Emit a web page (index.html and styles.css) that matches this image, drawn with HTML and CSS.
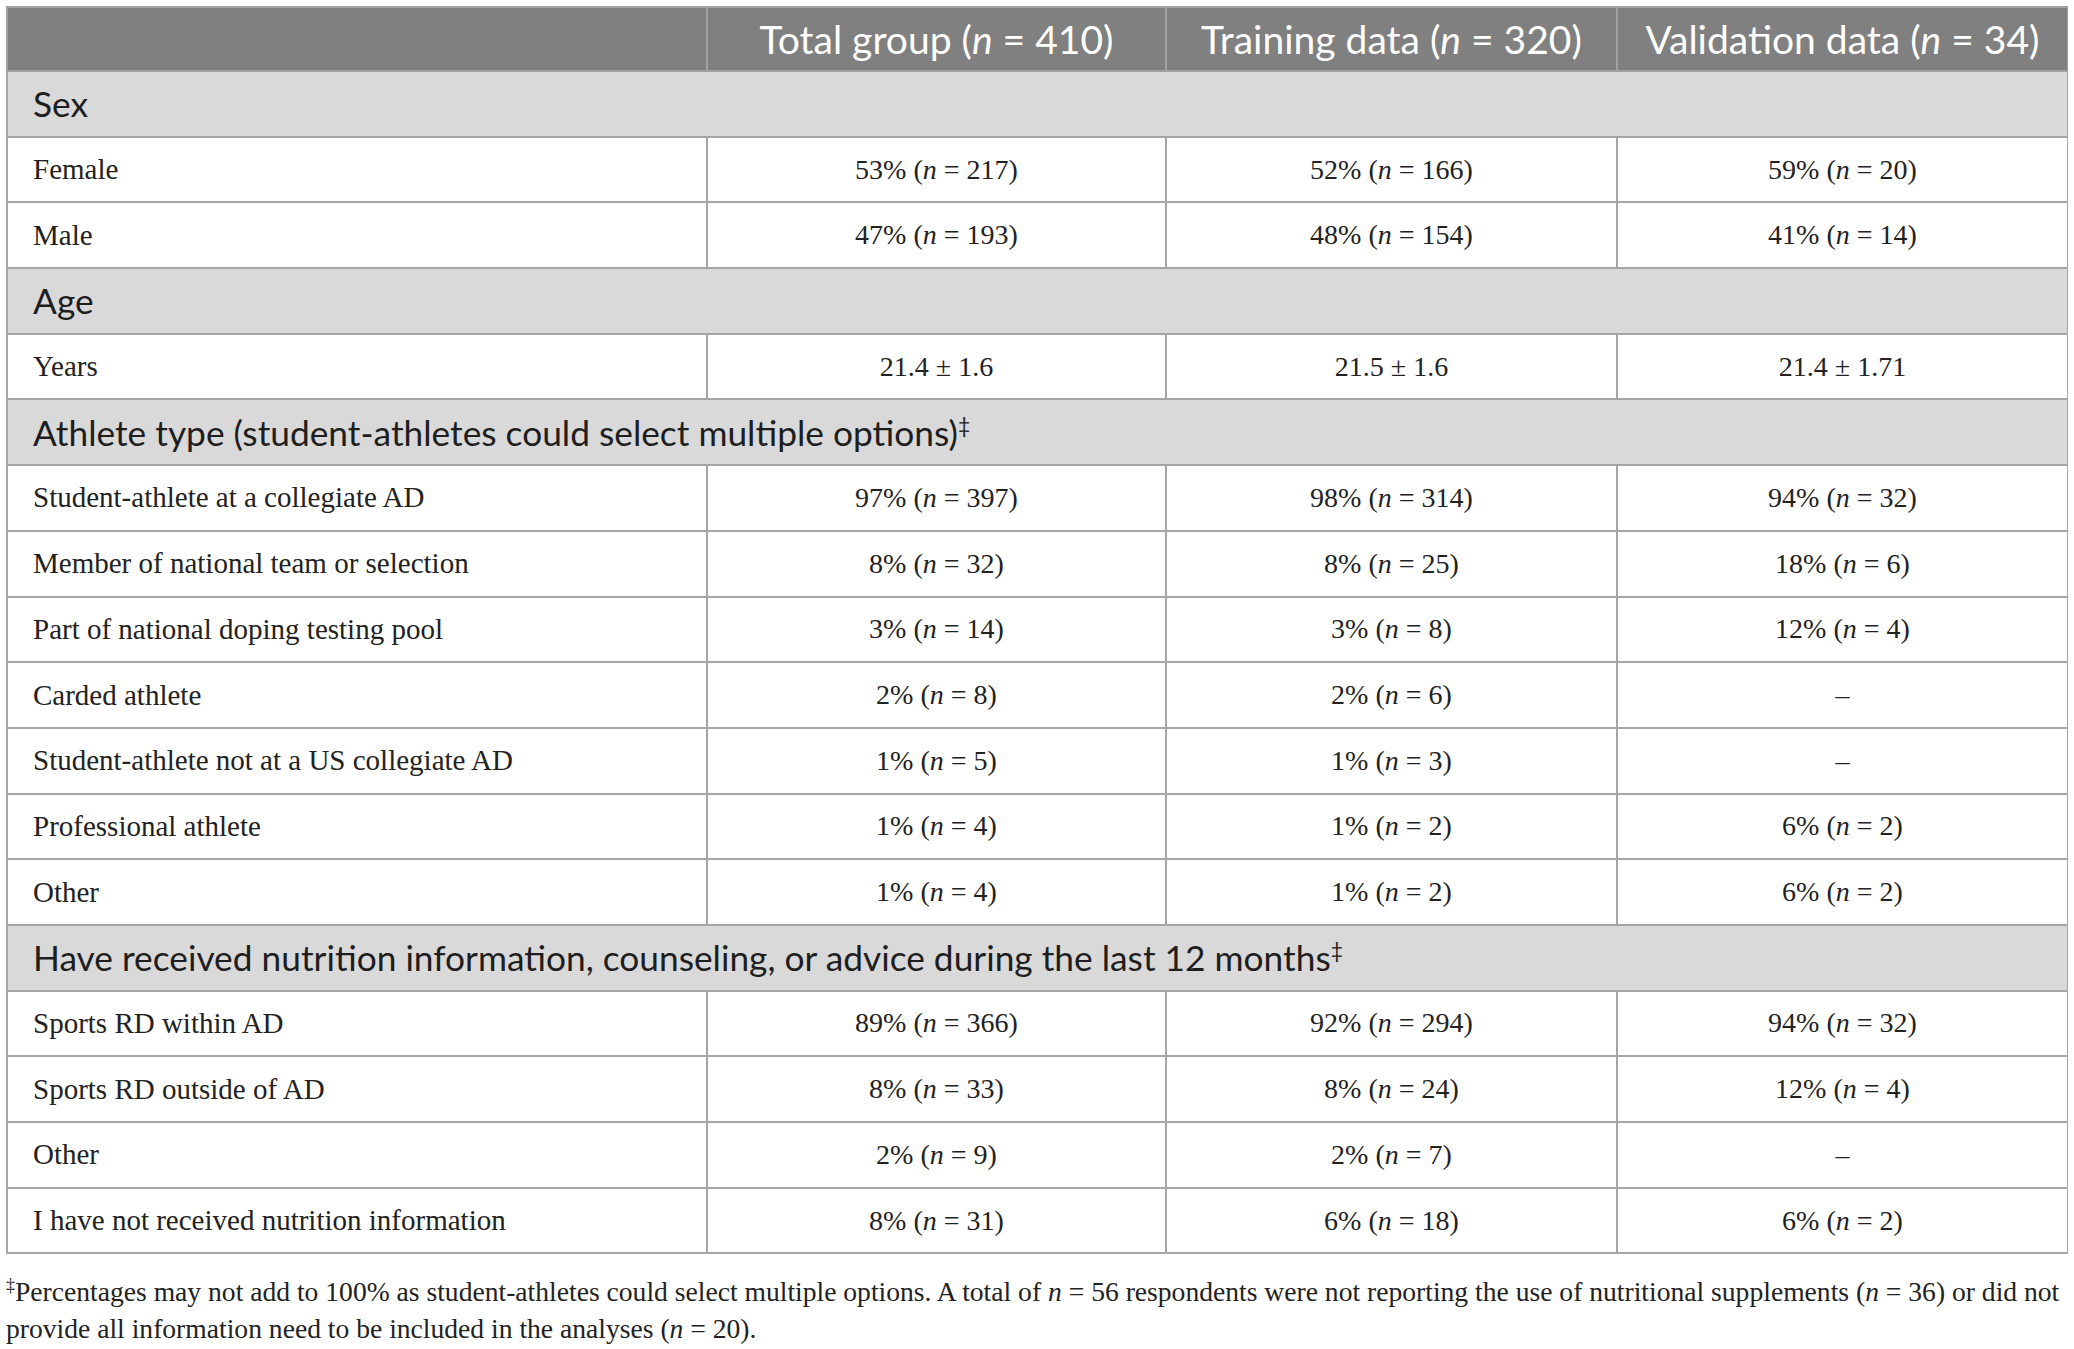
FILE: index.html
```html
<!DOCTYPE html>
<html lang="en">
  <head>
    <meta charset="UTF-8" />
    <title>Participant characteristics</title>
    <meta name="viewport" content="width=device-width, initial-scale=1.0" />
    <link rel="stylesheet" href="styles.css">
  </head>
  <body>
    <table class="data-table">
      <colgroup>
        <col class="col-label" />
        <col class="col-total" />
        <col class="col-train" />
        <col class="col-valid" />
      </colgroup>
      <thead>
        <tr>
          <th></th>
          <th>Total group (<i>n</i> = 410)</th>
          <th>Training data (<i>n</i> = 320)</th>
          <th>Validation data (<i>n</i> = 34)</th>
        </tr>
      </thead>
      <tbody>
        <tr class="group"><td colspan="4">Sex</td></tr>
        <tr><td>Female</td><td>53% (<i>n</i> = 217)</td><td>52% (<i>n</i> = 166)</td><td>59% (<i>n</i> = 20)</td></tr>
        <tr><td>Male</td><td>47% (<i>n</i> = 193)</td><td>48% (<i>n</i> = 154)</td><td>41% (<i>n</i> = 14)</td></tr>

        <tr class="group"><td colspan="4">Age</td></tr>
        <tr><td>Years</td><td>21.4 ± 1.6</td><td>21.5 ± 1.6</td><td>21.4 ± 1.71</td></tr>

        <tr class="group"><td colspan="4">Athlete type (student-athletes could select multiple options)<sup>‡</sup></td></tr>
        <tr><td>Student-athlete at a collegiate AD</td><td>97% (<i>n</i> = 397)</td><td>98% (<i>n</i> = 314)</td><td>94% (<i>n</i> = 32)</td></tr>
        <tr><td>Member of national team or selection</td><td>8% (<i>n</i> = 32)</td><td>8% (<i>n</i> = 25)</td><td>18% (<i>n</i> = 6)</td></tr>
        <tr><td>Part of national doping testing pool</td><td>3% (<i>n</i> = 14)</td><td>3% (<i>n</i> = 8)</td><td>12% (<i>n</i> = 4)</td></tr>
        <tr><td>Carded athlete</td><td>2% (<i>n</i> = 8)</td><td>2% (<i>n</i> = 6)</td><td>–</td></tr>
        <tr><td>Student-athlete not at a US collegiate AD</td><td>1% (<i>n</i> = 5)</td><td>1% (<i>n</i> = 3)</td><td>–</td></tr>
        <tr><td>Professional athlete</td><td>1% (<i>n</i> = 4)</td><td>1% (<i>n</i> = 2)</td><td>6% (<i>n</i> = 2)</td></tr>
        <tr><td>Other</td><td>1% (<i>n</i> = 4)</td><td>1% (<i>n</i> = 2)</td><td>6% (<i>n</i> = 2)</td></tr>

        <tr class="group"><td colspan="4">Have received nutrition information, counseling, or advice during the last 12 months<sup>‡</sup></td></tr>
        <tr><td>Sports RD within AD</td><td>89% (<i>n</i> = 366)</td><td>92% (<i>n</i> = 294)</td><td>94% (<i>n</i> = 32)</td></tr>
        <tr><td>Sports RD outside of AD</td><td>8% (<i>n</i> = 33)</td><td>8% (<i>n</i> = 24)</td><td>12% (<i>n</i> = 4)</td></tr>
        <tr><td>Other</td><td>2% (<i>n</i> = 9)</td><td>2% (<i>n</i> = 7)</td><td>–</td></tr>
        <tr><td>I have not received nutrition information</td><td>8% (<i>n</i> = 31)</td><td>6% (<i>n</i> = 18)</td><td>6% (<i>n</i> = 2)</td></tr>
      </tbody>
    </table>
    <p class="footnote">
      <sup>‡</sup>Percentages may not add to 100% as student-athletes could select multiple options. A total of <i>n</i> = 56 respondents were not reporting the use of nutritional supplements (<i>n</i> = 36) or did not provide all information need to be included in the analyses (<i>n</i> = 20).
    </p>
  </body>
</html>
```

FILE: styles.css
```css
html {
  background: #fff;
}

body {
  margin: 6px 6px 0 6px;
  color: #222;
  font-family: "Liberation Serif", "DejaVu Serif", serif;
}

.data-table {
  width: 100%;
  table-layout: fixed;
  border-collapse: collapse;
  border: 2px solid #a6a6a6;
}

.data-table .col-label {
  width: 700px;
}

.data-table .col-total {
  width: 459px;
}

.data-table .col-train,
.data-table .col-valid {
  width: 451px;
}

.data-table th {
  height: 62px;
  padding: 0;
  background: #808080;
  color: #fff;
  font-family: Lato, "Open Sans", sans-serif;
  font-size: 39px;
  font-weight: 400;
  text-align: center;
  border: 2px solid #a0a0a0;
}

.data-table td {
  height: 63.7px;
  padding: 0;
  font-size: 28px;
  text-align: center;
  border: 2px solid #a6a6a6;
}

.data-table td:first-child {
  padding-left: 25px;
  font-size: 29px;
  text-align: left;
}

.data-table .group td {
  background: #d9d9d9;
  font-family: Lato, "Open Sans", sans-serif;
  font-size: 35.3px;
  color: #1e1e1e;
}

.data-table sup {
  font-size: 60%;
  line-height: 0;
}

.footnote {
  margin: 19px 0 0;
  font-size: 27.6px;
  line-height: 37px;
  color: #222;
}

.footnote sup {
  font-size: 65%;
  line-height: 0;
}
```
